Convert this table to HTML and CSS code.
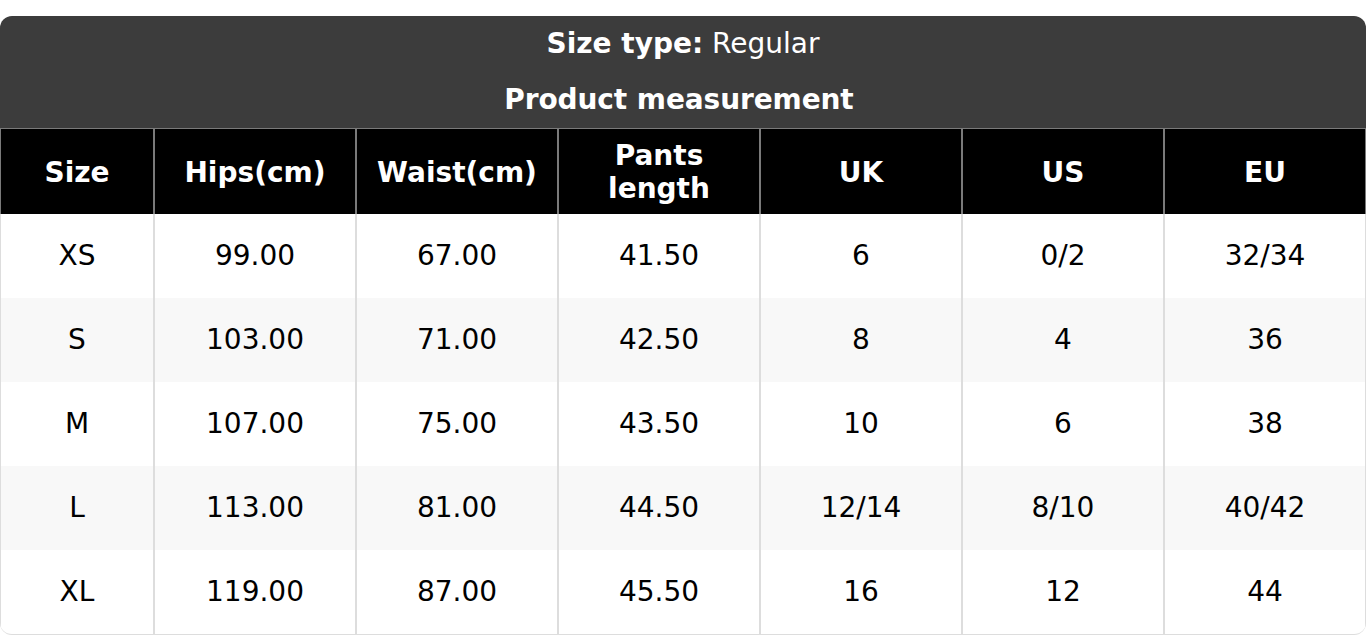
FILE: index.html
```html
<!DOCTYPE html>
<html>
<head>
<meta charset="utf-8">
<link rel="stylesheet" href="styles.css">
</head>
<body>
<div class="chart">
  <div class="title">
    <div class="title-line"><b>Size type:</b> Regular</div>
    <div class="title-line title-sub"><b>Product measurement</b></div>
  </div>
  <table class="sizes">
    <colgroup>
      <col class="col-first">
      <col><col><col><col><col><col>
    </colgroup>
    <thead>
      <tr>
        <th>Size</th><th>Hips(cm)</th><th>Waist(cm)</th><th>Pants<br>length</th><th>UK</th><th>US</th><th>EU</th>
      </tr>
    </thead>
    <tbody>
      <tr><td>XS</td><td>99.00</td><td>67.00</td><td>41.50</td><td>6</td><td>0/2</td><td>32/34</td></tr>
      <tr><td>S</td><td>103.00</td><td>71.00</td><td>42.50</td><td>8</td><td>4</td><td>36</td></tr>
      <tr><td>M</td><td>107.00</td><td>75.00</td><td>43.50</td><td>10</td><td>6</td><td>38</td></tr>
      <tr><td>L</td><td>113.00</td><td>81.00</td><td>44.50</td><td>12/14</td><td>8/10</td><td>40/42</td></tr>
      <tr><td>XL</td><td>119.00</td><td>87.00</td><td>45.50</td><td>16</td><td>12</td><td>44</td></tr>
    </tbody>
  </table>
</div>
</body>
</html>
```

FILE: styles.css
```css
html, body {
  margin: 0;
  padding: 0;
  background: #ffffff;
}
body {
  padding-top: 16px;
  font-family: "DejaVu Sans", Verdana, sans-serif;
  font-size: 28px;
  color: #000;
}
.chart {
  width: 1366px;
  box-sizing: border-box;
  border-radius: 12px;
  overflow: hidden;
  border-bottom: 1px solid #dddddd;
}
.title {
  background: #3c3c3c;
  color: #ffffff;
  text-align: center;
  height: 112px;
  display: flex;
  flex-direction: column;
}
.title-line {
  height: 56px;
  line-height: 56px;
}
.title-sub {
  padding-right: 8px;
  letter-spacing: -0.1px;
}
.sizes {
  width: 100%;
  table-layout: fixed;
  border-collapse: separate;
  border-spacing: 0;
}
.col-first {
  width: 154px;
}
.sizes th {
  background: #000;
  color: #fff;
  font-weight: bold;
  line-height: 33px;
  padding: 9px 4px 8px;
  border-left: 1px solid #7a7a7a;
  border-right: 1px solid #7a7a7a;
  border-top: 1px solid #7a7a7a;
  height: 68px;
  box-sizing: content-box;
}
.sizes td {
  text-align: center;
  line-height: 34px;
  padding: 25px 4px;
  border-left: 1px solid #dddddd;
  border-right: 1px solid #dddddd;
}
.sizes tbody tr:nth-child(even) td {
  background: #f8f8f8;
}
```
